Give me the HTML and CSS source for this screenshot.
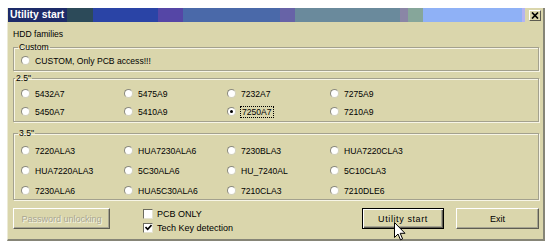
FILE: index.html
```html
<!DOCTYPE html>
<html>
<head>
<meta charset="utf-8">
<link rel="stylesheet" href="styles.css">
</head>
<body>
<div class="window">
  <div class="titlebar">
    <span class="title">Utility start</span>
    <span class="close"><svg width="8" height="7" viewBox="0 0 8 7"><path d="M1 0.5 L7 6.5 M7 0.5 L1 6.5" stroke="#000" stroke-width="1.7"/></svg></span>
  </div>
  <div class="client">
    <div class="caption">HDD families</div>
    <fieldset class="group g-custom">
      <legend>Custom</legend>
      <div class="opts">
        <label class="radio wide"><span class="mark"></span>CUSTOM, Only PCB access!!!</label>
      </div>
    </fieldset>
    <fieldset class="group g-25">
      <legend class="shift">2.5"</legend>
      <div class="opts">
        <label class="radio"><span class="mark"></span>5432A7</label>
        <label class="radio"><span class="mark"></span>5475A9</label>
        <label class="radio"><span class="mark"></span>7232A7</label>
        <label class="radio"><span class="mark"></span>7275A9</label>
        <label class="radio"><span class="mark"></span>5450A7</label>
        <label class="radio"><span class="mark"></span>5410A9</label>
        <label class="radio checked"><span class="mark"></span><span class="focus">7250A7</span></label>
        <label class="radio"><span class="mark"></span>7210A9</label>
      </div>
    </fieldset>
    <fieldset class="group g-35">
      <legend>3.5"</legend>
      <div class="opts">
        <label class="radio"><span class="mark"></span>7220ALA3</label>
        <label class="radio"><span class="mark"></span>HUA7230ALA6</label>
        <label class="radio"><span class="mark"></span>7230BLA3</label>
        <label class="radio"><span class="mark"></span>HUA7220CLA3</label>
        <label class="radio"><span class="mark"></span>HUA7220ALA3</label>
        <label class="radio"><span class="mark"></span>5C30ALA6</label>
        <label class="radio"><span class="mark"></span>HU_7240AL</label>
        <label class="radio"><span class="mark"></span>5C10CLA3</label>
        <label class="radio"><span class="mark"></span>7230ALA6</label>
        <label class="radio"><span class="mark"></span>HUA5C30ALA6</label>
        <label class="radio"><span class="mark"></span>7210CLA3</label>
        <label class="radio"><span class="mark"></span>7210DLE6</label>
      </div>
    </fieldset>
    <div class="bottom">
      <button class="btn pw" disabled>Password unlocking</button>
      <div class="checks">
        <label class="check"><span class="box"></span>PCB ONLY</label>
        <label class="check"><span class="box"><svg width="7" height="7" viewBox="0 0 7 7"><path d="M0.5 3 L2.7 5.3 L6.5 1" fill="none" stroke="#000" stroke-width="1.6"/></svg></span>Tech Key detection</label>
      </div>
      <button class="btn go">Utility start</button>
      <button class="btn exit">Exit</button>
    </div>
  </div>
  <svg class="cursor" width="12" height="19" viewBox="0 0 12 19"><path d="M0.5 0.5 L0.5 15.5 L4 12 L6.5 17.8 L8.6 16.9 L6.2 11.3 L11 11.3 Z" fill="#fff" stroke="#000" stroke-width="1"/></svg>
</div>
</body>
</html>
```

FILE: styles.css
```css
body {
  margin: 0;
  background: #ffffff;
  font-family: "Liberation Sans", Arial, sans-serif;
  font-size: 8.6px;
  color: #000;
}

.window {
  position: relative;
  margin: 8px 0 0 7px;
  width: 538px;
  box-sizing: border-box;
  background: #dad6ac;
  border-left: 1px solid #ecead6;
  border-right: 2px solid #868577;
  border-bottom: 2px solid #868577;
}

.titlebar {
  display: flex;
  align-items: center;
  justify-content: space-between;
  height: 14px;
  padding: 0 2px 0 2px;
  background: linear-gradient(to right,
    #1d2b69 0, #1d2b69 59px,
    #2c4a59 59px, #2c4a59 85px,
    #2a44a6 85px, #2a44a6 150px,
    #5546a6 150px, #5546a6 175px,
    #4a69a9 175px, #4a69a9 272px,
    #6763a7 272px, #6763a7 287px,
    #6a8a9c 287px, #6a8a9c 392px,
    #8a86a6 392px, #8a86a6 400px,
    #86a69a 400px, #86a69a 415px,
    #8fb1f6 415px, #8fb1f6 514px,
    #b4b4f2 514px, #b4b4f2 517px,
    #dad6ac 517px);
}

.title {
  color: #ffffff;
  font-weight: bold;
  font-size: 10.4px;
  line-height: 14px;
}

.close {
  display: flex;
  align-items: center;
  justify-content: center;
  width: 12px;
  height: 11px;
  box-sizing: border-box;
  background: #dad6ac;
  border: 1px solid;
  border-color: #ffffff #5d5c50 #5d5c50 #ffffff;
}

.close svg {
  display: block;
}

.client {
  padding: 7px 4px 5px 5px;
}

.caption {
  height: 11px;
  line-height: 11px;
}

.group {
  margin: 2px 0 0 0;
  padding: 2px 0 3px 7px;
  border: 1px solid #a3a18e;
  box-shadow: inset 1px 1px 0 #f7f5e6, 1px 1px 0 #f7f5e6;
  min-width: 0;
}

.group legend {
  padding: 0 1px;
  margin-left: -3px;
  line-height: 10px;
  height: 10px;
}

.group legend.shift {
  margin-left: -6px;
}

.g-25 {
  padding-top: 4px;
  padding-bottom: 3px;
}

.g-35 {
  margin-top: 6px;
  padding-top: 6px;
  padding-bottom: 2px;
}

.opts {
  display: grid;
  grid-template-columns: repeat(4, 103px);
  grid-auto-rows: 13px;
  row-gap: 5px;
}

.g-35 .opts {
  row-gap: 7px;
}

.radio {
  display: flex;
  align-items: center;
  white-space: nowrap;
}

.radio.wide {
  grid-column: 1 / span 2;
}

.mark {
  display: flex;
  align-items: center;
  justify-content: center;
  width: 9px;
  height: 9px;
  box-sizing: border-box;
  margin-right: 5px;
  border-radius: 50%;
  background: #ffffff;
  border: 1px solid;
  border-color: #8a897c #d2d0bc #d2d0bc #8a897c;
}

.checked .mark::after {
  content: "";
  width: 3px;
  height: 3px;
  border-radius: 50%;
  background: #000;
}

.focus {
  outline: 1px dotted #000;
  padding: 0 1px;
  line-height: 10px;
}

.bottom {
  display: flex;
  align-items: flex-start;
  margin-top: 7px;
}

.btn {
  height: 21px;
  margin: 1px 0 0 0;
  padding: 0;
  box-sizing: border-box;
  background: #dad6ac;
  font-family: "Liberation Sans", Arial, sans-serif;
  font-size: 9px;
  color: #000;
  border: 1px solid;
  border-color: #ffffff #5f5e52 #5f5e52 #ffffff;
  box-shadow: inset -1px -1px 0 #a7a592;
}

.pw {
  width: 97px;
  color: #a8a693;
  text-shadow: 1px 1px 0 #f6f4e4;
}

.checks {
  display: grid;
  grid-auto-rows: 13px;
  row-gap: 1px;
  margin-left: 33px;
  font-size: 9px;
}

.check {
  display: flex;
  align-items: center;
  white-space: nowrap;
}

.box {
  display: flex;
  align-items: center;
  justify-content: center;
  width: 10px;
  height: 10px;
  box-sizing: border-box;
  margin-right: 4px;
  background: #ffffff;
  border: 1px solid;
  border-color: #6c6b5e #e4e2d0 #e4e2d0 #6c6b5e;
}

.box svg {
  display: block;
}

.go {
  width: 82px;
  margin-left: auto;
  border: 1px solid #000;
  box-shadow: inset 1px 1px 0 #ffffff, inset -1px -1px 0 #5f5e52, inset -2px -2px 0 #a7a592;
  letter-spacing: 0.6px;
}

.exit {
  width: 83px;
  margin-left: 12px;
}

.cursor {
  position: absolute;
  left: 386px;
  top: 214px;
}
```
